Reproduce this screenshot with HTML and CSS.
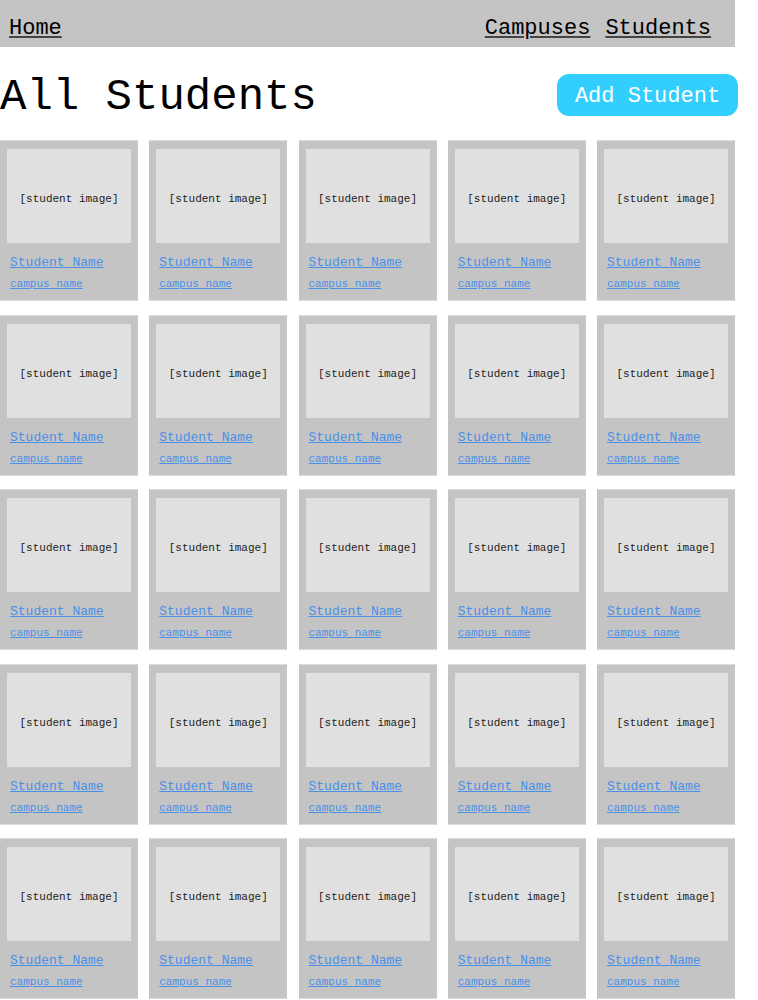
FILE: index.html
```html
<!DOCTYPE html>
<html>
<head>
<meta charset="utf-8">
<link rel="stylesheet" href="styles.css">
</head>
<body>
<div class="page">
  <nav class="nav">
    <a href="#" class="nav-link">Home</a>
    <div class="nav-right">
      <a href="#" class="nav-link">Campuses</a>
      <a href="#" class="nav-link">Students</a>
    </div>
  </nav>
  <div class="title-row">
    <h1 class="title">All Students</h1>
    <button class="add-btn">Add Student</button>
  </div>
  <div class="grid" id="grid"></div>
</div>
<script src="script.js"></script>
</body>
</html>
```

FILE: script.js
```js
var grid = document.getElementById('grid');
var html = '';
for (var i = 0; i < 25; i++) {
  html += '<div class="card">' +
    '<div class="card-img">[student image]</div>' +
    '<a href="#" class="card-name">Student Name</a>' +
    '<a href="#" class="card-campus">campus name</a>' +
    '</div>';
}
grid.innerHTML = html;
```

FILE: styles.css
```css
html, body {
  margin: 0;
  padding: 0;
  background: #ffffff;
}
body {
  font-family: "Liberation Mono", "DejaVu Sans Mono", monospace;
  color: #000;
}
.page {
  width: 735px;
}
.nav {
  height: 47px;
  background: #c4c4c4;
  display: flex;
  align-items: center;
  justify-content: space-between;
  padding: 0 24px 0 9px;
  box-sizing: border-box;
}
.nav-right {
  display: flex;
  gap: 15px;
}
.nav-link {
  color: #000;
  font-size: 22px;
  text-decoration: underline;
  text-decoration-color: #444;
  line-height: 26px;
  padding-top: 10px;
}
.title-row {
  width: 738px;
  display: flex;
  align-items: center;
  justify-content: space-between;
  height: 93px;
}
.title {
  margin: 0;
  font-size: 44px;
  font-weight: normal;
  line-height: 52px;
  padding-top: 6px;
}
.add-btn {
  font-family: inherit;
  width: 181px;
  height: 42px;
  border: none;
  border-radius: 12px;
  background: #32cefe;
  color: #fff;
  font-size: 22px;
  padding: 4px 0 0;
  margin-top: 2px;
}
.grid {
  display: grid;
  grid-template-columns: repeat(5, 1fr);
  column-gap: 11.25px;
  row-gap: 13.5px;
}
.card {
  background: #c4c4c4;
  border: 1px solid #dcdcdc;
  border-left-color: #c4c4c4;
  border-right-color: #c8c8c8;
  padding: 8px 6px 9px;
  display: flex;
  flex-direction: column;
  align-items: flex-start;
}
.card-img {
  align-self: stretch;
  height: 94px;
  background: #e0e0e0;
  display: flex;
  align-items: center;
  justify-content: center;
  font-size: 11px;
  color: #222;
  padding-top: 6px;
  box-sizing: border-box;
}
.card-name {
  margin: 11px 0 0 3px;
  font-size: 13px;
  line-height: 18px;
  color: #4a90e8;
}
.card-campus {
  margin: 5px 0 0 3px;
  font-size: 11px;
  line-height: 14px;
  color: #4a90e8;
}
```
